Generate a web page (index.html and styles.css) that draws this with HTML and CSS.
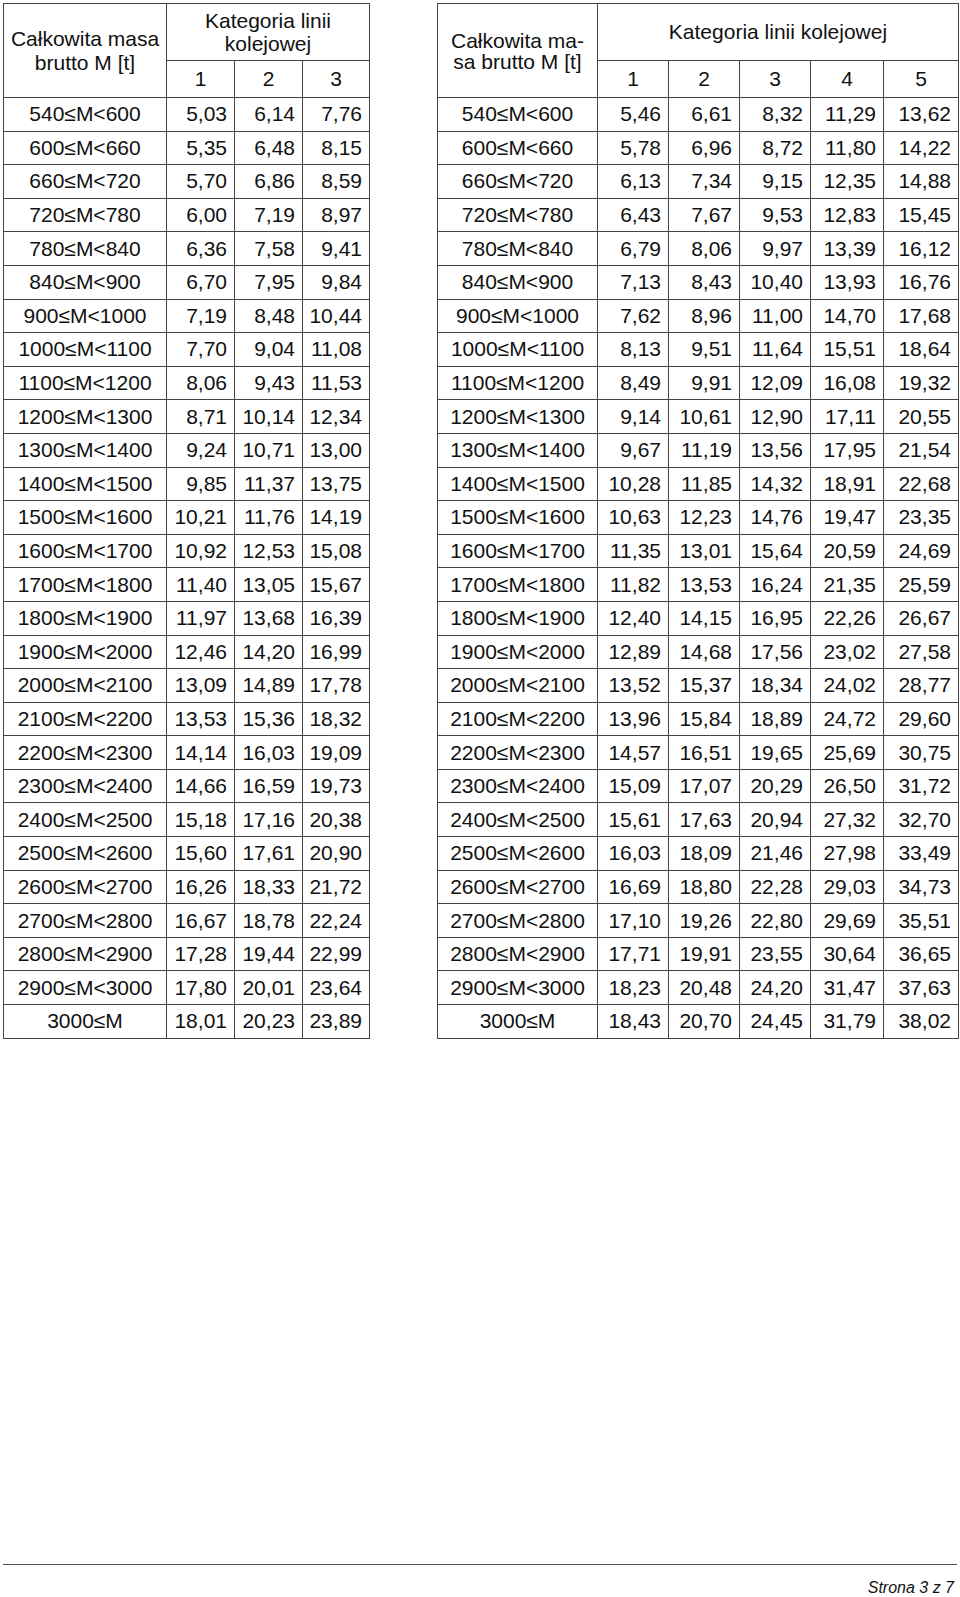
FILE: index.html
```html
<!DOCTYPE html>
<html lang="pl">
<head>
<meta charset="utf-8">
<title>Tabela</title>
<link rel="stylesheet" href="styles.css">
</head>
<body>
<div class="page">
  <div class="tables">
    <table class="tbl tbl-left">
      <colgroup><col class="c-mass-l"><col class="c-l"><col class="c-l"><col class="c-l3"></colgroup>
      <thead>
        <tr class="h1">
          <th rowspan="2" class="mass-h mass-h-l">Całkowita masa<br>brutto M [t]</th>
          <th colspan="3" class="cat-h cat-h-l">Kategoria linii<br>kolejowej</th>
        </tr>
        <tr class="h2"><th>1</th><th>2</th><th>3</th></tr>
      </thead>
      <tbody>
        <tr><td>540≤M&lt;600</td><td>5,03</td><td>6,14</td><td>7,76</td></tr>
        <tr><td>600≤M&lt;660</td><td>5,35</td><td>6,48</td><td>8,15</td></tr>
        <tr><td>660≤M&lt;720</td><td>5,70</td><td>6,86</td><td>8,59</td></tr>
        <tr><td>720≤M&lt;780</td><td>6,00</td><td>7,19</td><td>8,97</td></tr>
        <tr><td>780≤M&lt;840</td><td>6,36</td><td>7,58</td><td>9,41</td></tr>
        <tr><td>840≤M&lt;900</td><td>6,70</td><td>7,95</td><td>9,84</td></tr>
        <tr><td>900≤M&lt;1000</td><td>7,19</td><td>8,48</td><td>10,44</td></tr>
        <tr><td>1000≤M&lt;1100</td><td>7,70</td><td>9,04</td><td>11,08</td></tr>
        <tr><td>1100≤M&lt;1200</td><td>8,06</td><td>9,43</td><td>11,53</td></tr>
        <tr><td>1200≤M&lt;1300</td><td>8,71</td><td>10,14</td><td>12,34</td></tr>
        <tr><td>1300≤M&lt;1400</td><td>9,24</td><td>10,71</td><td>13,00</td></tr>
        <tr><td>1400≤M&lt;1500</td><td>9,85</td><td>11,37</td><td>13,75</td></tr>
        <tr><td>1500≤M&lt;1600</td><td>10,21</td><td>11,76</td><td>14,19</td></tr>
        <tr><td>1600≤M&lt;1700</td><td>10,92</td><td>12,53</td><td>15,08</td></tr>
        <tr><td>1700≤M&lt;1800</td><td>11,40</td><td>13,05</td><td>15,67</td></tr>
        <tr><td>1800≤M&lt;1900</td><td>11,97</td><td>13,68</td><td>16,39</td></tr>
        <tr><td>1900≤M&lt;2000</td><td>12,46</td><td>14,20</td><td>16,99</td></tr>
        <tr><td>2000≤M&lt;2100</td><td>13,09</td><td>14,89</td><td>17,78</td></tr>
        <tr><td>2100≤M&lt;2200</td><td>13,53</td><td>15,36</td><td>18,32</td></tr>
        <tr><td>2200≤M&lt;2300</td><td>14,14</td><td>16,03</td><td>19,09</td></tr>
        <tr><td>2300≤M&lt;2400</td><td>14,66</td><td>16,59</td><td>19,73</td></tr>
        <tr><td>2400≤M&lt;2500</td><td>15,18</td><td>17,16</td><td>20,38</td></tr>
        <tr><td>2500≤M&lt;2600</td><td>15,60</td><td>17,61</td><td>20,90</td></tr>
        <tr><td>2600≤M&lt;2700</td><td>16,26</td><td>18,33</td><td>21,72</td></tr>
        <tr><td>2700≤M&lt;2800</td><td>16,67</td><td>18,78</td><td>22,24</td></tr>
        <tr><td>2800≤M&lt;2900</td><td>17,28</td><td>19,44</td><td>22,99</td></tr>
        <tr><td>2900≤M&lt;3000</td><td>17,80</td><td>20,01</td><td>23,64</td></tr>
        <tr><td>3000≤M</td><td>18,01</td><td>20,23</td><td>23,89</td></tr>
      </tbody>
    </table>

    <table class="tbl tbl-right">
      <colgroup><col class="c-mass-r"><col class="c-r"><col class="c-r"><col class="c-r"><col class="c-r4"><col class="c-r5"></colgroup>
      <thead>
        <tr class="h1">
          <th rowspan="2" class="mass-h mass-h-r">Całkowita ma-<br>sa brutto M [t]</th>
          <th colspan="5" class="cat-h">Kategoria linii kolejowej</th>
        </tr>
        <tr class="h2"><th>1</th><th>2</th><th>3</th><th>4</th><th>5</th></tr>
      </thead>
      <tbody>
        <tr><td>540≤M&lt;600</td><td>5,46</td><td>6,61</td><td>8,32</td><td>11,29</td><td>13,62</td></tr>
        <tr><td>600≤M&lt;660</td><td>5,78</td><td>6,96</td><td>8,72</td><td>11,80</td><td>14,22</td></tr>
        <tr><td>660≤M&lt;720</td><td>6,13</td><td>7,34</td><td>9,15</td><td>12,35</td><td>14,88</td></tr>
        <tr><td>720≤M&lt;780</td><td>6,43</td><td>7,67</td><td>9,53</td><td>12,83</td><td>15,45</td></tr>
        <tr><td>780≤M&lt;840</td><td>6,79</td><td>8,06</td><td>9,97</td><td>13,39</td><td>16,12</td></tr>
        <tr><td>840≤M&lt;900</td><td>7,13</td><td>8,43</td><td>10,40</td><td>13,93</td><td>16,76</td></tr>
        <tr><td>900≤M&lt;1000</td><td>7,62</td><td>8,96</td><td>11,00</td><td>14,70</td><td>17,68</td></tr>
        <tr><td>1000≤M&lt;1100</td><td>8,13</td><td>9,51</td><td>11,64</td><td>15,51</td><td>18,64</td></tr>
        <tr><td>1100≤M&lt;1200</td><td>8,49</td><td>9,91</td><td>12,09</td><td>16,08</td><td>19,32</td></tr>
        <tr><td>1200≤M&lt;1300</td><td>9,14</td><td>10,61</td><td>12,90</td><td>17,11</td><td>20,55</td></tr>
        <tr><td>1300≤M&lt;1400</td><td>9,67</td><td>11,19</td><td>13,56</td><td>17,95</td><td>21,54</td></tr>
        <tr><td>1400≤M&lt;1500</td><td>10,28</td><td>11,85</td><td>14,32</td><td>18,91</td><td>22,68</td></tr>
        <tr><td>1500≤M&lt;1600</td><td>10,63</td><td>12,23</td><td>14,76</td><td>19,47</td><td>23,35</td></tr>
        <tr><td>1600≤M&lt;1700</td><td>11,35</td><td>13,01</td><td>15,64</td><td>20,59</td><td>24,69</td></tr>
        <tr><td>1700≤M&lt;1800</td><td>11,82</td><td>13,53</td><td>16,24</td><td>21,35</td><td>25,59</td></tr>
        <tr><td>1800≤M&lt;1900</td><td>12,40</td><td>14,15</td><td>16,95</td><td>22,26</td><td>26,67</td></tr>
        <tr><td>1900≤M&lt;2000</td><td>12,89</td><td>14,68</td><td>17,56</td><td>23,02</td><td>27,58</td></tr>
        <tr><td>2000≤M&lt;2100</td><td>13,52</td><td>15,37</td><td>18,34</td><td>24,02</td><td>28,77</td></tr>
        <tr><td>2100≤M&lt;2200</td><td>13,96</td><td>15,84</td><td>18,89</td><td>24,72</td><td>29,60</td></tr>
        <tr><td>2200≤M&lt;2300</td><td>14,57</td><td>16,51</td><td>19,65</td><td>25,69</td><td>30,75</td></tr>
        <tr><td>2300≤M&lt;2400</td><td>15,09</td><td>17,07</td><td>20,29</td><td>26,50</td><td>31,72</td></tr>
        <tr><td>2400≤M&lt;2500</td><td>15,61</td><td>17,63</td><td>20,94</td><td>27,32</td><td>32,70</td></tr>
        <tr><td>2500≤M&lt;2600</td><td>16,03</td><td>18,09</td><td>21,46</td><td>27,98</td><td>33,49</td></tr>
        <tr><td>2600≤M&lt;2700</td><td>16,69</td><td>18,80</td><td>22,28</td><td>29,03</td><td>34,73</td></tr>
        <tr><td>2700≤M&lt;2800</td><td>17,10</td><td>19,26</td><td>22,80</td><td>29,69</td><td>35,51</td></tr>
        <tr><td>2800≤M&lt;2900</td><td>17,71</td><td>19,91</td><td>23,55</td><td>30,64</td><td>36,65</td></tr>
        <tr><td>2900≤M&lt;3000</td><td>18,23</td><td>20,48</td><td>24,20</td><td>31,47</td><td>37,63</td></tr>
        <tr><td>3000≤M</td><td>18,43</td><td>20,70</td><td>24,45</td><td>31,79</td><td>38,02</td></tr>
      </tbody>
    </table>
  </div>

  <div class="spacer"></div>

  <footer class="footer">
    <div class="footer-rule"></div>
    <div class="footer-text">Strona 3 z 7</div>
  </footer>
</div>
</body>
</html>
```

FILE: styles.css
```css
html, body {
  margin: 0;
  padding: 0;
  background: #ffffff;
}

body {
  font-family: "Liberation Sans", Arial, Helvetica, sans-serif;
  color: #111111;
}

.page {
  width: 960px;
  height: 1597px;
  display: flex;
  flex-direction: column;
  box-sizing: border-box;
  padding: 3px 3px 0 3px;
}

.tables {
  display: flex;
  align-items: flex-start;
  gap: 67px;
}

.tbl {
  border-collapse: collapse;
  table-layout: fixed;
  font-size: 21px;
}

.tbl-left { width: 366px; }
.tbl-right { width: 521px; }

.c-mass-l { width: 163px; }
.c-l { width: 68px; }
.c-l3 { width: 67px; }
.c-mass-r { width: 160px; }
.c-r { width: 71px; }
.c-r4 { width: 73px; }
.c-r5 { width: 75px; }

.tbl th,
.tbl td {
  border: 1px solid #444444;
  padding: 0;
  font-weight: normal;
  vertical-align: middle;
  white-space: nowrap;
}

.tbl th {
  text-align: center;
}

.mass-h-l { line-height: 24px; padding-top: 6px; }
.mass-h-r { line-height: 21px; padding-top: 6px; }
.cat-h-l { line-height: 23px; }

.h1 { height: 57px; }
.h2 { height: 37px; }

.tbl tbody tr { height: 33.6px; }

.tbl td {
  text-align: right;
  padding-right: 7px;
}

.tbl td:first-child {
  text-align: center;
  padding-right: 0;
}

.spacer { flex: 1; }

.footer {
  display: flex;
  flex-direction: column;
  align-items: stretch;
  height: 33px;
}

.footer-rule {
  height: 1px;
  background: #555555;
}

.footer-text {
  text-align: right;
  font-style: italic;
  font-size: 16px;
  padding-top: 14px;
  padding-right: 3px;
}
```
